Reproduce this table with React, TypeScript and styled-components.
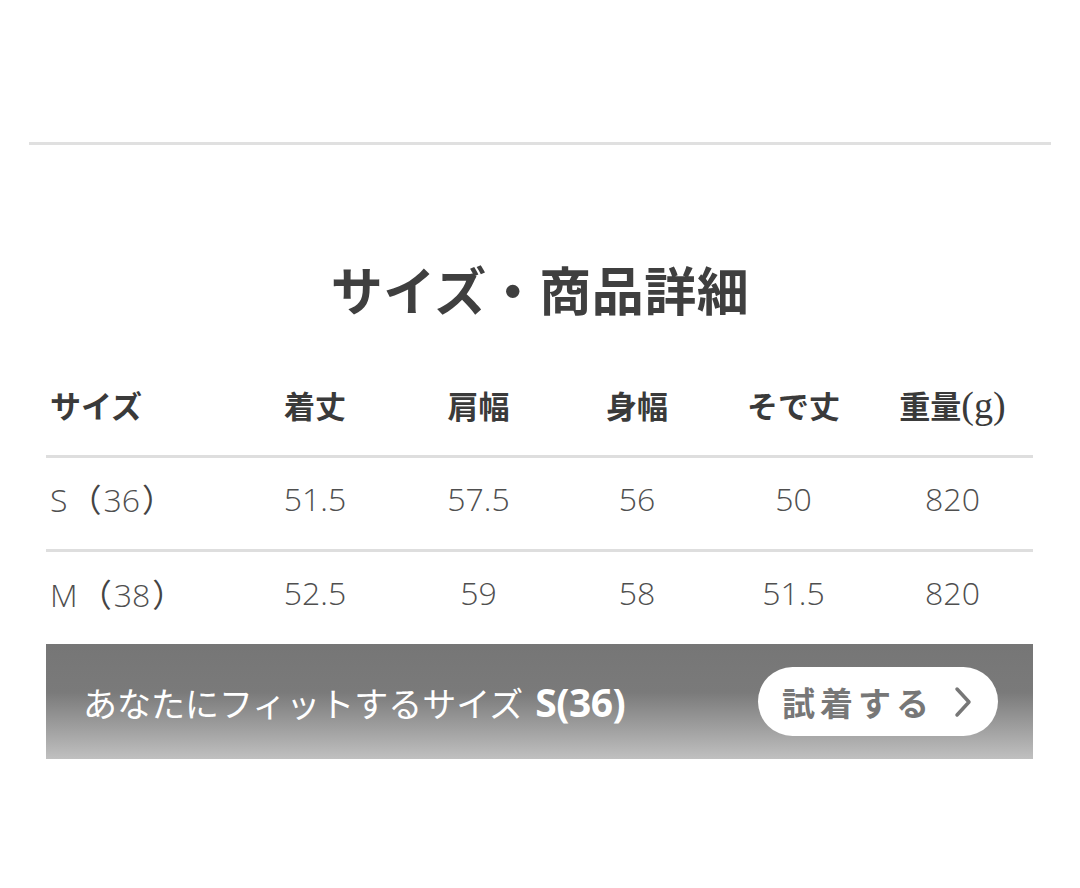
import React from "react";
import styled, { createGlobalStyle } from "styled-components";

const Global = createGlobalStyle`
  html, body { margin: 0; padding: 0; background: #ffffff; }
  body { font-family: "Noto Sans CJK JP", "Noto Sans", sans-serif; }
`;

const Page = styled.div`
  width: 1080px;
  height: 888px;
  padding-top: 142px;
  box-sizing: border-box;
  background: #fff;
`;

const Divider = styled.div`
  height: 3px;
  margin: 0 29px;
  background: #e0e0e0;
`;

const Title = styled.h2`
  margin: 114px 0 0;
  height: 60px;
  line-height: 60px;
  text-align: center;
  font-family: "Noto Sans CJK JP", sans-serif;
  font-weight: 700;
  font-size: 52px;
  color: #3f3f3f;
  letter-spacing: 0.5px;
`;

const Section = styled.div`
  margin: 41px 47px 0 46px;
`;

const Row = styled.div<{ $head?: boolean; $last?: boolean }>`
  display: grid;
  grid-template-columns: 186px 166px 161px 156px 157px 161px;
  align-items: center;
  height: ${(p) => (p.$head ? "95px" : p.$last ? "92px" : "91px")};
  border-bottom: ${(p) => (p.$last ? "none" : "3px solid #dedede")};
`;

const Cell = styled.div<{ $head?: boolean; $first?: boolean }>`
  text-align: ${(p) => (p.$first ? "left" : "center")};
  padding-left: ${(p) => (p.$first ? "4px" : "0")};
  padding-bottom: ${(p) => (p.$head ? "6px" : "11px")};
  white-space: nowrap;
  font-family: ${(p) =>
    p.$head
      ? '"Noto Sans CJK JP", sans-serif'
      : '"Open Sans", "Noto Sans CJK JP", sans-serif'};
  font-weight: ${(p) => (p.$head ? 700 : 300)};
  font-size: ${(p) => (p.$head ? "31px" : "32px")};
  color: ${(p) => (p.$head ? "#3a3a3a" : "#4f4f4f")};
`;

const Paren = styled.span`
  font-family: "Noto Sans CJK JP", sans-serif;
  font-weight: 400;
  color: #444;
  margin: 0 2px;
`;

const Unit = styled.span`
  font-family: "Liberation Serif", serif;
  font-weight: 400;
  font-size: 38px;
  color: #3a3a3a;
`;

const Banner = styled.div`
  display: flex;
  align-items: center;
  justify-content: space-between;
  height: 115px;
  padding: 0 35px 0 37px;
  box-sizing: border-box;
  background: linear-gradient(
    180deg,
    #767676 0%,
    #7a7a7a 42%,
    #a5a5a5 78%,
    #c0c0c0 100%
  );
`;

const BannerText = styled.div`
  color: #ffffff;
  font-family: "Noto Sans CJK JP", sans-serif;
  font-size: 34px;
  font-weight: 400;
  white-space: nowrap;
`;

const Strong = styled.span`
  font-family: "Open Sans", "Noto Sans", sans-serif;
  font-weight: 700;
  font-size: 39px;
  margin-left: 12px;
  letter-spacing: -0.5px;
`;

const TryButton = styled.button`
  display: flex;
  align-items: center;
  width: 240px;
  height: 69px;
  padding: 0 24px 0 24px;
  box-sizing: border-box;
  border: none;
  border-radius: 35px;
  background: #ffffff;
  color: #777777;
  font-family: "Noto Sans CJK JP", sans-serif;
  font-weight: 700;
  font-size: 33px;
  letter-spacing: 5px;
  cursor: pointer;
`;

const Chevron = styled.svg`
  width: 24px;
  height: 34px;
  margin-left: auto;
`;

const head: React.ReactNode[] = [
  "サイズ",
  "着丈",
  "肩幅",
  "身幅",
  "そで丈",
  <>
    重量<Unit>(g)</Unit>
  </>,
];
const rows: React.ReactNode[][] = [
  [<>S<Paren>（</Paren>36<Paren>）</Paren></>, "51.5", "57.5", "56", "50", "820"],
  [<>M<Paren>（</Paren>38<Paren>）</Paren></>, "52.5", "59", "58", "51.5", "820"],
];

export default function App() {
  return (
    <Page>
      <Global />
      <Divider />
      <Title>サイズ・商品詳細</Title>
      <Section>
        <Row $head>
          {head.map((h, i) => (
            <Cell key={i} $head $first={i === 0}>
              {h}
            </Cell>
          ))}
        </Row>
        {rows.map((r, ri) => (
          <Row key={ri} $last={ri === rows.length - 1}>
            {r.map((c, i) => (
              <Cell key={i} $first={i === 0}>
                {c}
              </Cell>
            ))}
          </Row>
        ))}
        <Banner>
          <BannerText>
            あなたにフィットするサイズ<Strong>S(36)</Strong>
          </BannerText>
          <TryButton>
            試着する
            <Chevron viewBox="0 0 24 34" fill="none">
              <path
                d="M7 4 L19 17 L7 30"
                stroke="#777"
                strokeWidth="3.5"
                strokeLinecap="round"
                strokeLinejoin="round"
              />
            </Chevron>
          </TryButton>
        </Banner>
      </Section>
    </Page>
  );
}
